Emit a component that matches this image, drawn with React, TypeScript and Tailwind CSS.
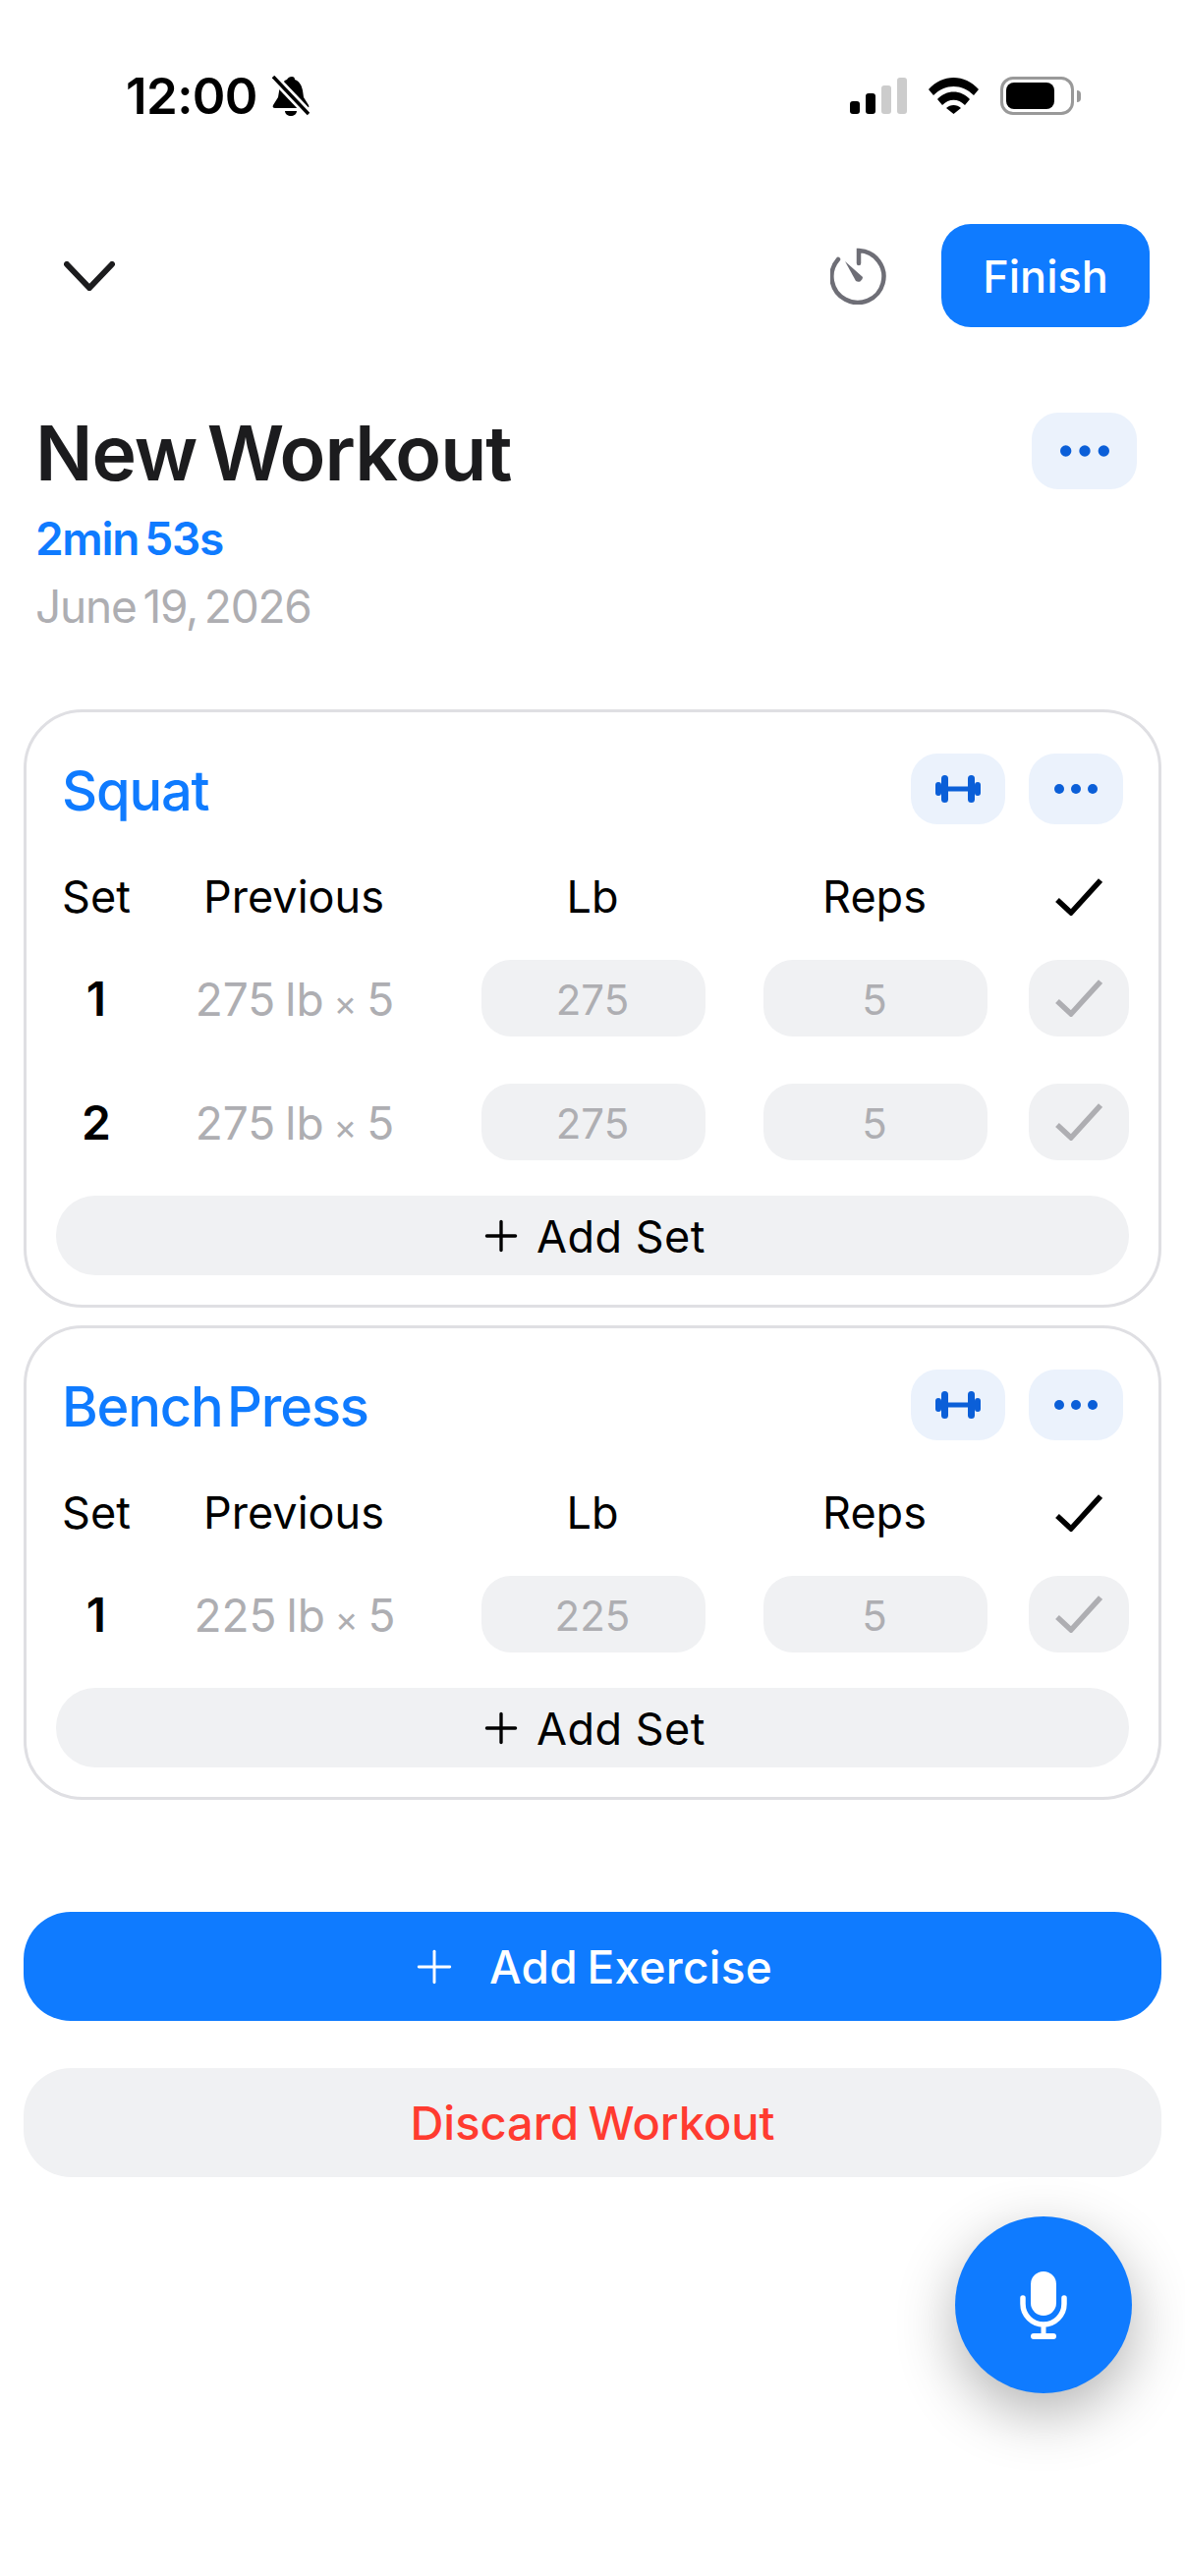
import { Plus } from 'lucide-react'

const Check = ({ className }: { className: string }) => (
  <svg viewBox="0 0 48 38" className={className} fill="none" stroke="currentColor" strokeWidth="5.5">
    <path d="M2 22 L16 35 L46 2" />
  </svg>
)

const Dots = ({ className }: { className: string }) => (
  <svg viewBox="0 0 44 10" className={className} fill="currentColor">
    <circle cx="5" cy="5" r="5" />
    <circle cx="22" cy="5" r="5" />
    <circle cx="39" cy="5" r="5" />
  </svg>
)

const Barbell = () => (
  <svg viewBox="0 0 46 28" className="h-[28px] w-[46px] text-[#0b5fd8]" fill="currentColor">
    <rect x="0" y="7" width="6" height="14" rx="3" />
    <rect x="6" y="0" width="7" height="28" rx="3.5" />
    <rect x="13" y="11.5" width="20" height="5" />
    <rect x="33" y="0" width="7" height="28" rx="3.5" />
    <rect x="40" y="7" width="6" height="14" rx="3" />
  </svg>
)

function StatusBar() {
  return (
    <div className="flex h-[41px] items-center justify-between pl-[128px] pr-[106px]">
      <div className="flex items-center gap-[15px]">
        <span className="text-[51px] font-semibold leading-[41px] tracking-[-0.6px] text-black">12:00</span>
        <svg viewBox="0 0 38 41" className="h-[41px] w-[38px]" fill="black">
          <path d="M20 1c2 0 3 1 3 3 5 2 7 6 8 11l1 7 5 8c1 2 0 3-2 3H3c-2 0-3-1-2-3l5-8 1-6c1-6 3-10 8-12 1-2 3-3 5-3z" />
          <path d="M13 36h12c0 3-3 5-6 5s-6-2-6-5z" />
          <path d="M-1 -1 L40 42" stroke="white" strokeWidth="9" />
          <path d="M1 1 L37 39" stroke="black" strokeWidth="3.5" />
        </svg>
      </div>
      <div className="flex items-center">
        <div className="flex items-end gap-[6px]">
          <div className="h-[13px] w-[10px] rounded-[3px] bg-black" />
          <div className="h-[21px] w-[10px] rounded-[3px] bg-black" />
          <div className="h-[29px] w-[10px] rounded-[3px] bg-[#cccccc]" />
          <div className="h-[37px] w-[10px] rounded-[3px] bg-[#cccccc]" />
        </div>
        <svg viewBox="0 0 51 37" className="ml-[22px] h-[37px] w-[51px]" fill="black">
          <path d="M0 12 C14 -4 37 -4 51 12 L46 18 C34 6 17 6 5 18 Z" />
          <path d="M9 22 C18 12 33 12 42 22 L37 28 C30 21 21 21 14 28 Z" />
          <path d="M18 31 C22 27 29 27 33 31 L25.5 37 Z" />
        </svg>
        <div className="ml-[22px] flex items-center">
          <div className="flex h-[39px] w-[75px] items-center rounded-[13px] border-[3px] border-[#999999] p-[3px]">
            <div className="h-full w-[49px] rounded-[8px] bg-black" />
          </div>
          <div className="ml-[3px] h-[12px] w-[4px] rounded-r-full bg-[#999999]" />
        </div>
      </div>
    </div>
  )
}

function Row({ set, prev, lb, reps }: { set: string; prev: string; lb: string; reps: string }) {
  return (
    <div className="flex h-[78px] items-center">
      <div className="w-[84px] pr-[2px] pt-[2px] text-center text-[48px] font-semibold text-black">{set}</div>
      <div className="w-[318px] pt-[2px] text-center text-[46px] text-[#aeaeb2] [word-spacing:-3px]">
        {prev} <span className="text-[36px]">×</span> {reps}
      </div>
      <div className="ml-[31px] flex h-full w-[228px] items-center justify-center rounded-[30px] bg-[#f0f1f3] pr-[2px] pt-[2px] text-[42px] text-[#aeaeb2]">{lb}</div>
      <div className="ml-[59px] flex h-full w-[228px] items-center justify-center rounded-[30px] bg-[#f0f1f3] pr-[2px] pt-[2px] text-[42px] text-[#aeaeb2]">{reps}</div>
      <div className="ml-[42px] flex h-full w-[102px] items-center justify-center rounded-[30px] bg-[#f0f1f3] text-[#aeaeb2]">
        <Check className="h-[38px] w-[48px]" />
      </div>
    </div>
  )
}

function ExerciseCard({ name, rows }: { name: string; rows: { set: string; prev: string; lb: string; reps: string }[] }) {
  return (
    <div className="rounded-[60px] border-[3px] border-[#dfdfe3] px-[30px] pb-[30px] pt-[42px]">
      <div className="flex h-[72px] items-center justify-between px-[6px]">
        <div className="pt-[4px] text-[56px] font-medium tracking-[-1.2px] text-[#0f7bff] [word-spacing:-9px]">{name}</div>
        <div className="flex gap-[24px]">
          <div className="flex h-[72px] w-[96px] items-center justify-center rounded-[27px] bg-[#ebf2fc]">
            <Barbell />
          </div>
          <div className="flex h-[72px] w-[96px] items-center justify-center rounded-[27px] bg-[#ebf2fc]">
            <Dots className="h-[10px] w-[44px] text-[#0b5fd8]" />
          </div>
        </div>
      </div>
      <div className="mb-[30px] mt-[40px] flex h-[68px] items-center text-[45px] text-black">
        <div className="w-[84px] pr-[2px] text-center">Set</div>
        <div className="w-[318px] pr-[2px] text-center">Previous</div>
        <div className="ml-[31px] w-[228px] pr-[2px] text-center">Lb</div>
        <div className="ml-[59px] w-[228px] pr-[2px] text-center">Reps</div>
        <div className="ml-[42px] flex w-[102px] justify-center">
          <Check className="h-[38px] w-[48px]" />
        </div>
      </div>
      <div className="flex flex-col gap-[48px]">
        {rows.map((r) => (
          <Row key={r.set} {...r} />
        ))}
      </div>
      <div className="mt-[36px] flex h-[81px] items-center justify-center gap-[11px] rounded-[40px] bg-[#f0f1f3] pr-[3px] text-[45px] text-black">
        <Plus className="h-[50px] w-[50px]" strokeWidth={1.6} />
        <span className="pt-[2px] tracking-[0.5px]">Add Set</span>
      </div>
    </div>
  )
}

export default function App() {
  return (
    <div className="relative h-[2622px] w-[1206px] overflow-hidden bg-white pt-[77px] font-['Inter',sans-serif]">
      <StatusBar />

      {/* top bar */}
      <div className="mt-[110px] flex h-[105px] items-center pl-[65px] pr-[36px]">
        <svg viewBox="0 0 52 30" className="h-[30px] w-[52px] text-[#1c1c1e]" fill="none" stroke="currentColor" strokeWidth="6" strokeLinecap="round">
          <path d="M3 3 L26 27 L49 3" />
        </svg>
        <svg viewBox="0 0 58 58" className="ml-auto h-[58px] w-[58px] text-[#6e6e76]" fill="none" stroke="currentColor" strokeWidth="4.5" strokeLinecap="round">
          <path d="M29 16 V3 A26.5 26.5 0 1 1 8 12" />
          <path d="M15 14 L33 30 A4.5 4.5 0 0 1 26 34 Z" fill="currentColor" stroke="none" />
        </svg>
        <div className="ml-[55px] flex h-[105px] w-[212px] items-center justify-center rounded-[30px] bg-[#0f7bff] pt-[3px] text-[45px] font-medium text-white">
          Finish
        </div>
      </div>

      {/* title */}
      <div className="mt-[83px] flex items-start justify-between pl-[36px] pr-[49px]">
        <div>
          <div className="text-[77px] font-semibold leading-[90px] tracking-[-1px] text-[#1c1c1e] [word-spacing:-8px]">New Workout</div>
          <div className="mt-[14px] text-[46px] font-semibold leading-[56px] tracking-[-1.3px] text-[#0f7bff] [word-spacing:-4px]">2min 53s</div>
          <div className="mt-[13px] text-[46px] leading-[56px] tracking-[-1.2px] text-[#aeaeb2] [word-spacing:-5px]">June 19, 2026</div>
        </div>
        <div className="mt-[4px] flex h-[78px] w-[107px] items-center justify-center rounded-[27px] bg-[#ebf2fc]">
          <Dots className="h-[12px] w-[50px] text-[#0b5fd8]" />
        </div>
      </div>

      {/* exercises */}
      <div className="mt-[77px] flex flex-col gap-[18px] px-[24px]">
        <ExerciseCard
          name="Squat"
          rows={[
            { set: '1', prev: '275 lb', lb: '275', reps: '5' },
            { set: '2', prev: '275 lb', lb: '275', reps: '5' },
          ]}
        />
        <ExerciseCard name="Bench Press" rows={[{ set: '1', prev: '225 lb', lb: '225', reps: '5' }]} />
      </div>

      {/* bottom actions */}
      <div className="mt-[114px] flex flex-col gap-[48px] px-[24px]">
        <div className="flex h-[111px] items-center justify-center gap-[29px] rounded-[48px] bg-[#0f7bff] pr-[5px] text-[46px] font-medium text-white">
          <Plus className="h-[54px] w-[54px]" strokeWidth={1.3} />
          <span className="pt-[2px] tracking-[0.3px] [word-spacing:-3px]">Add Exercise</span>
        </div>
        <div className="flex h-[111px] items-center justify-center rounded-[48px] bg-[#f0f1f3] pt-[2px] text-[47px] font-medium text-[#ff3b30] [word-spacing:-3px]">
          Discard Workout
        </div>
      </div>

      {/* mic button */}
      <div className="absolute left-[972px] top-[2256px] flex h-[180px] w-[180px] items-center justify-center rounded-full bg-[#0f7bff] shadow-[0_20px_60px_rgba(0,0,0,0.3)]">
        <svg viewBox="0 0 48 69" className="h-[69px] w-[48px]" fill="white">
          <rect x="11" y="0" width="26" height="45" rx="13" />
          <path d="M3 27 v6 a21 21 0 0 0 42 0 v-6" fill="none" stroke="white" strokeWidth="5.5" strokeLinecap="round" />
          <rect x="21.5" y="53" width="5" height="12" />
          <rect x="11" y="63" width="26" height="6" rx="3" />
        </svg>
      </div>
    </div>
  )
}
